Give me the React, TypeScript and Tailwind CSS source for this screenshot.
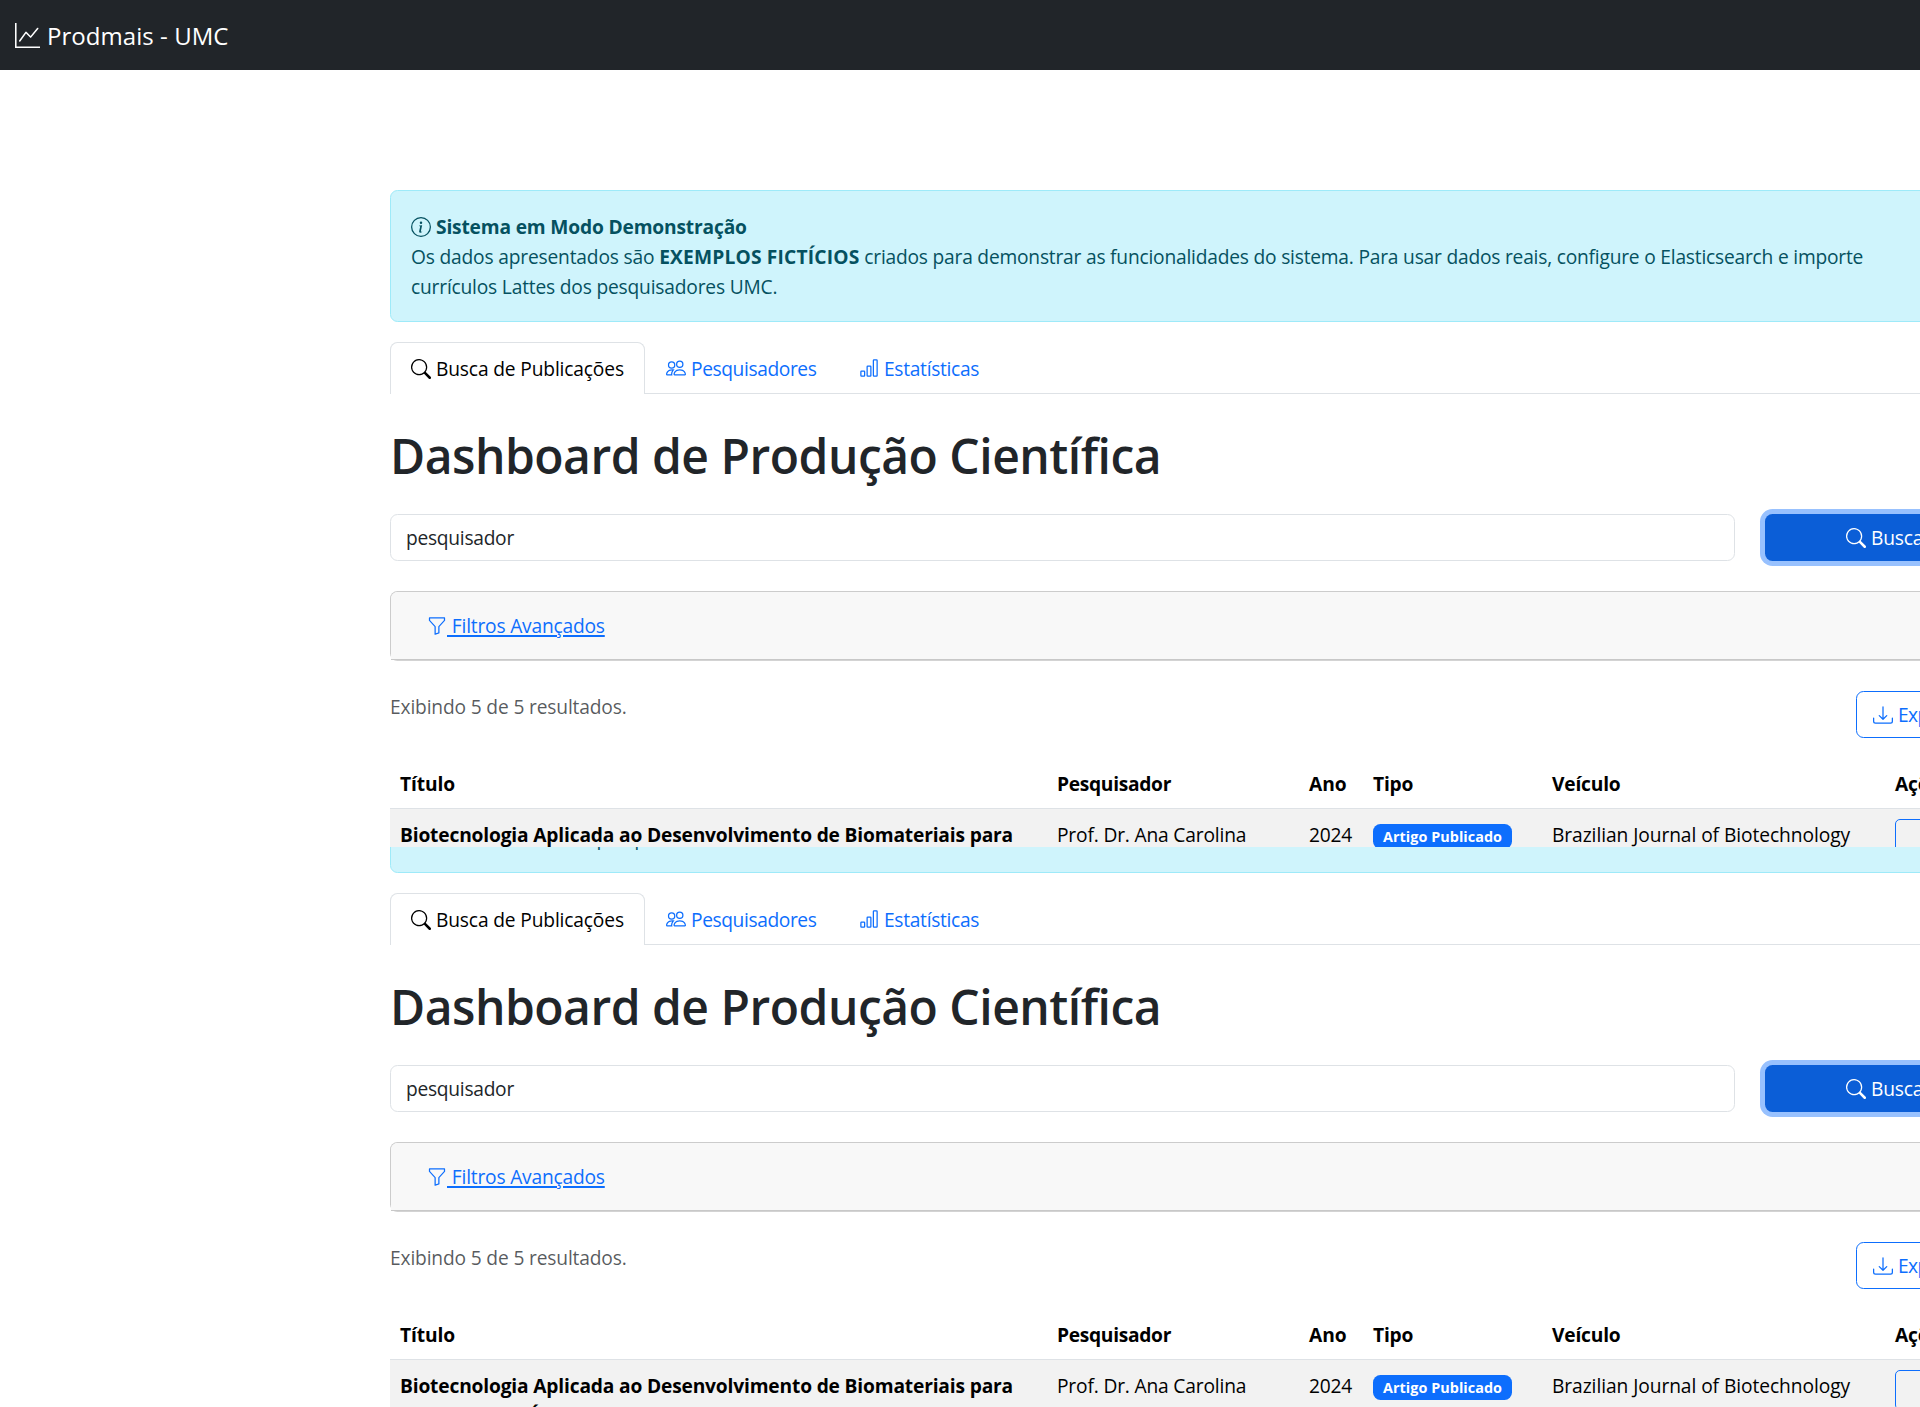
import type { ReactNode } from "react";
import { BsBarChart, BsDownload, BsFunnel, BsGraphUp, BsInfoCircle, BsPeople, BsSearch } from "react-icons/bs";

const ICON = "inline-block size-5 shrink-0";

function DemoAlert() {
  return (
    <div className="h-[132px] rounded-[7.5px] border border-[#9eeaf9] bg-[#cff4fc] px-5 pt-[21px] whitespace-nowrap text-[#055160]">
      <div className="flex h-[30px] items-center gap-[5px]">
        <BsInfoCircle className={`${ICON} -mt-px`} />
        <strong className="tracking-[-0.17px]">Sistema em Modo Demonstração</strong>
      </div>
      <p>
        <span className="tracking-[-0.18px]">Os dados apresentados são </span>
        <strong className="tracking-[0.18px]">EXEMPLOS FICTÍCIOS</strong>{" "}
        <span className="tracking-[-0.21px]">
          criados para demonstrar as funcionalidades do sistema. Para usar dados reais, configure o Elasticsearch e
          importe
        </span>
        <br />
        <span className="tracking-[-0.19px]">currículos Lattes dos pesquisadores UMC.</span>
      </p>
    </div>
  );
}

function Tabs() {
  return (
    <nav className="mt-5 flex h-[52px] border-b border-[#dee2e6] whitespace-nowrap text-[#0d6efd]">
      <a className="-mb-px flex w-[255px] items-center gap-[5px] rounded-t-[7.5px] border border-b-0 border-[#dee2e6] bg-white pl-5 text-black">
        <BsSearch className={ICON} />
        <span className="pt-px tracking-[-0.15px]">Busca de Publicações</span>
      </a>
      <a className="flex w-[194px] items-center gap-[5px] pt-px pl-[21px]">
        <BsPeople className={ICON} />
        <span className="pt-px tracking-[-0.4px]">Pesquisadores</span>
      </a>
      <a className="flex items-center gap-[5px] pt-px pl-5">
        <BsBarChart className={ICON} />
        <span className="pt-px tracking-[-0.3px]">Estatísticas</span>
      </a>
    </nav>
  );
}

function SearchForm() {
  return (
    <div className="mt-[30px] flex gap-[30px]">
      <div className="flex h-[47px] w-[1345px] items-center rounded-[7.5px] border border-[#dee2e6] px-[15px] pt-px tracking-[-0.27px]">
        pesquisador
      </div>
      <button className="flex h-[47px] w-[245px] items-center gap-[5px] rounded-[7.5px] bg-[#0b5ed7] pl-[81px] text-white shadow-[0_0_0_5px_#98c1fe]">
        <BsSearch className={`${ICON} mt-px`} />
        <span className="pt-px">Buscar</span>
      </button>
    </div>
  );
}

function HeadCell({ children }: { children: ReactNode }) {
  return <div className="px-[10px] pt-[11px] font-bold">{children}</div>;
}

const GRID = "grid grid-cols-[657px_252px_64px_179px_344px_124px] whitespace-nowrap text-black";

function ResultsTable() {
  return (
    <div className="mt-5">
      <div className={`${GRID} h-[51px] border-b border-[#dee2e6]`}>
        <HeadCell>
          <span className="tracking-[-0.1px]">Título</span>
        </HeadCell>
        <HeadCell>
          <span className="tracking-[-0.3px]">Pesquisador</span>
        </HeadCell>
        <HeadCell>
          <span className="tracking-normal">Ano</span>
        </HeadCell>
        <HeadCell>Tipo</HeadCell>
        <HeadCell>Veículo</HeadCell>
        <HeadCell>
          <span className="-ml-px">Ações</span>
        </HeadCell>
      </div>
      <div className={`${GRID} h-[81px] bg-[#f2f2f2]`}>
        <div className="px-[10px] pt-[11px] font-bold tracking-[-0.17px]">
          Biotecnologia Aplicada ao Desenvolvimento de Biomateriais para
          <br />
          Regeneração Óssea
        </div>
        <div className="px-[10px] pt-[11px] tracking-[-0.17px]">Prof. Dr. Ana Carolina</div>
        <div className="px-[10px] pt-[11px]">2024</div>
        <div className="px-[10px] pt-[15px]">
          <span className="flex h-[25px] w-[139px] items-center justify-center rounded-[7.5px] bg-[#0d6efd] pt-px text-[14.4px] font-bold tracking-[0.05px] text-white">
            Artigo Publicado
          </span>
        </div>
        <div className="px-[10px] pt-[11px] tracking-[-0.07px]">Brazilian Journal of Biotechnology</div>
        <div className="pt-[10px] pl-[9px]">
          <div className="h-[40px] w-[60px] rounded-[5px] border border-[#0d6efd]" />
        </div>
      </div>
    </div>
  );
}

function Dashboard() {
  return (
    <main className="ml-[390px] w-[1620px]">
      <DemoAlert />
      <Tabs />
      <h1 className="mt-[32px] h-[58px] text-[48px] leading-[60px] font-semibold tracking-[-0.5px] whitespace-nowrap">
        Dashboard de Produção Científica
      </h1>
      <SearchForm />
      <div className="mt-[30px] h-[70px] rounded-[7.5px] border border-[#cccccc] border-b-[#d3d3d3] bg-white">
        <div className="flex h-full items-center rounded-t-[6.5px] border-b border-[#c8c8c8] bg-[#f8f8f8] pl-[36px] text-[#0d6efd]">
          <BsFunnel className={ICON} />
          <a className="whitespace-pre underline decoration-2 underline-offset-[2px]"> Filtros Avançados</a>
        </div>
      </div>
      <div className="mt-[30px] flex h-[47px] items-start">
        <p className="w-[1466px] pt-px tracking-[-0.16px] text-[#212529]/75">Exibindo 5 de 5 resultados.</p>
        <button className="flex h-[47px] w-[154px] items-center gap-[5px] rounded-[7.5px] border border-[#0d6efd] pl-[16px] whitespace-nowrap text-[#0d6efd]">
          <BsDownload className={ICON} />
          <span className="pt-px tracking-[-0.6px]">Exportar</span>
        </button>
      </div>
      <ResultsTable />
    </main>
  );
}

export default function App() {
  return (
    <div className="h-[1407px] w-[1920px] overflow-hidden bg-white font-['Open_Sans',sans-serif] text-[19.2px] leading-[30px] tracking-[-0.2px] text-[#212529]">
      <section className="h-[847px] overflow-hidden">
        <header className="mb-[120px] flex h-[70px] items-center gap-[7px] bg-[#212529] pl-[15px] text-[24px] text-white">
          <BsGraphUp className="size-[25px]" />
          <span className="pt-px tracking-[0.05px]">Prodmais - UMC</span>
        </header>
        <Dashboard />
      </section>
      <section className="flex h-[560px] items-start overflow-hidden">
        <div className="-mt-[106px]">
          <Dashboard />
        </div>
      </section>
    </div>
  );
}
